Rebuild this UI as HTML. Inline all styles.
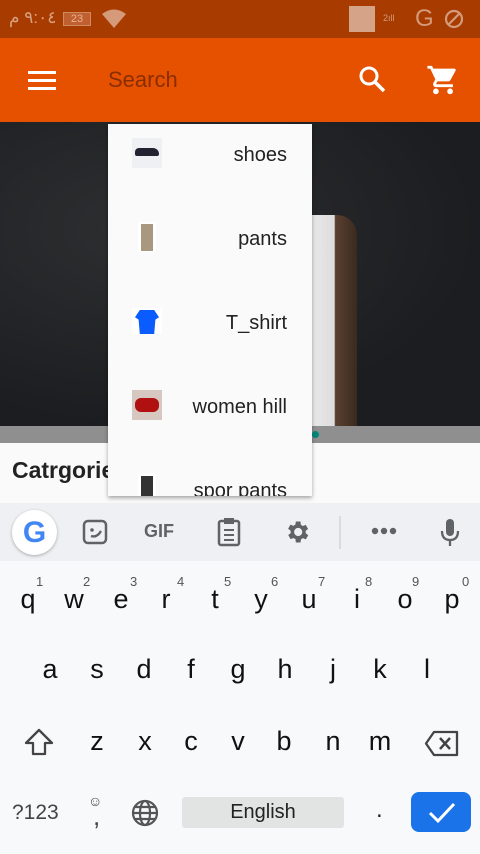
<!DOCTYPE html>
<html><head><meta charset="utf-8"><style>
*{margin:0;padding:0;box-sizing:border-box}
body{width:480px;height:854px;overflow:hidden;position:relative;font-family:"Liberation Sans","Noto Sans CJK SC",sans-serif;background:#f8f9fb}
.abs{position:absolute}
.k{position:absolute;font-size:27px;color:#111;transform:translateX(-50%);line-height:1}
.n{position:absolute;font-size:13px;color:#555;line-height:1}
.item{position:absolute;left:0;width:204px;height:84px}
.item .th{position:absolute;left:24px;top:14px;width:30px;height:30px}
.item .t{position:absolute;right:25px;top:20px;font-size:20px;color:#222}
</style></head><body>
<div class="abs" style="left:0;top:0;width:480px;height:38px;background:#a83c00"></div>
<div class="abs" style="left:9px;top:8px;font-size:17px;color:#d9a080;direction:ltr;unicode-bidi:bidi-override">م ٩:٠٤</div>
<div class="abs" style="left:63px;top:12px;width:28px;height:14px;border:1px solid #d08a60;background:#c06030;color:#e8b090;font-size:11px;text-align:center;line-height:12px">23</div>
<svg class="abs" style="left:101px;top:9px" width="27" height="20"><path d="M1 5 Q13 -4 25 5 L13 19Z" fill="#d49a7a"/></svg>
<div class="abs" style="left:349px;top:6px;width:26px;height:26px;background:#d4a388"></div>
<div class="abs" style="left:383px;top:13px;font-size:9px;color:#d49a7a">2ıll</div>
<div class="abs" style="left:415px;top:5px;font-size:24px;color:#d49a7a">G</div>
<svg class="abs" style="left:444px;top:9px" width="20" height="20"><circle cx="10" cy="10" r="8" fill="none" stroke="#d49a7a" stroke-width="2.2"/><path d="M4 16 L16 4" stroke="#d49a7a" stroke-width="2.2"/></svg>
<div class="abs" style="left:0;top:38px;width:480px;height:84px;background:#e65100"></div>
<div class="abs" style="left:28px;top:71px;width:28px;height:3px;background:#fff;box-shadow:0 8px 0 #fff,0 16px 0 #fff"></div>
<div class="abs" style="left:108px;top:67px;font-size:22px;color:#8a2e00">Search</div>
<svg class="abs" style="left:357px;top:64px" width="30" height="30"><circle cx="12" cy="12" r="8" fill="none" stroke="#fff" stroke-width="3"/><path d="M18 18 L27 27" stroke="#fff" stroke-width="3.5"/></svg>
<svg class="abs" style="left:426px;top:63px" width="34" height="34" viewBox="0 0 24 24"><path fill="#fff" d="M7 18c-1.1 0-2 .9-2 2s.9 2 2 2 2-.9 2-2-.9-2-2-2zM1 2v2h2l3.6 7.6-1.350 2.4c-.16.3-.25.6-.25 1 0 1.1.9 2 2 2h12v-2H7.4c-.14 0-.25-.1-.25-.25l.03-.12.9-1.63h7.45c.75 0 1.4-.4 1.750-1.03l3.58-6.49A1 1 0 0 0 20 4H5.2l-.94-2H1zm16 16c-1.1 0-2 .9-2 2s.9 2 2 2 2-.9 2-2-.9-2-2-2z"/></svg>
<div class="abs" style="left:0;top:122px;width:480px;height:304px;background:radial-gradient(ellipse at 30% 35%,#2e2f31,#1c1d20 70%)"></div>
<div class="abs" style="left:300px;top:215px;width:57px;height:211px;background:linear-gradient(90deg,#eee,#ddd 60%,#5a4030 62%,#3a2a20);border-radius:10px 20px 0 0"></div>
<div class="abs" style="left:0;top:426px;width:480px;height:17px;background:#8f8f8f"></div>
<div class="abs" style="left:312px;top:431px;width:7px;height:7px;border-radius:50%;background:#00897b"></div>
<div class="abs" style="left:0;top:443px;width:480px;height:60px;background:#fafafa"></div>
<div class="abs" style="left:12px;top:457px;font-size:23px;font-weight:bold;color:#222">Catrgories</div>
<div class="abs" style="left:108px;top:124px;width:204px;height:372px;background:#fafafa;box-shadow:0 2px 4px rgba(0,0,0,.35);overflow:hidden">
<div class="item" style="top:0"><div class="th" style="background:#eef0f3"><div style="margin:10px 3px;width:24px;height:8px;background:#223;border-radius:4px 6px 2px 2px"></div></div><div class="t">shoes</div></div>
<div class="item" style="top:84px"><div class="th" style="left:30px;width:18px;background:#fff"><div style="margin:2px 3px;width:12px;height:27px;background:#a89880"></div></div><div class="t">pants</div></div>
<div class="item" style="top:168px"><div class="th" style="top:16px;height:26px;background:#fff"><div style="margin:2px 3px;width:24px;height:24px;background:#0b5cff;clip-path:polygon(20% 0,80% 0,100% 30%,85% 40%,80% 100%,20% 100%,15% 40%,0 30%)"></div></div><div class="t">T_shirt</div></div>
<div class="item" style="top:252px"><div class="th" style="background:#d6c8c0"><div style="margin:8px 3px;width:24px;height:14px;background:#b01010;border-radius:6px"></div></div><div class="t">women hill</div></div>
<div class="item" style="top:336px"><div class="th" style="left:30px;width:18px;background:#fff"><div style="margin:2px 3px;width:12px;height:28px;background:#333"></div></div><div class="t">spor pants</div></div>
</div>
<div class="abs" style="left:0;top:503px;width:480px;height:58px;background:#eef0f3"></div>
<div class="abs" style="left:12px;top:510px;width:45px;height:45px;border-radius:50%;background:#fff;box-shadow:0 1px 3px rgba(0,0,0,.3);font-weight:bold;font-size:30px;text-align:center;line-height:45px;color:#4285f4">G</div>
<svg class="abs" style="left:82px;top:519px" width="28" height="28"><rect x="2" y="2" width="22" height="22" rx="4" fill="none" stroke="#5f6368" stroke-width="2.5"/><circle cx="10" cy="11" r="1.8" fill="#5f6368"/><path d="M9 17 Q15 19 19 12" fill="none" stroke="#5f6368" stroke-width="2.3"/></svg>
<div class="abs" style="left:144px;top:521px;font-size:18px;font-weight:bold;color:#5f6368">GIF</div>
<svg class="abs" style="left:217px;top:517px" width="26" height="30"><rect x="2" y="4" width="20" height="24" rx="2" fill="none" stroke="#5f6368" stroke-width="2.5"/><rect x="7" y="1" width="10" height="6" fill="#5f6368"/><path d="M7 13h10M7 18h10M7 23h10" stroke="#5f6368" stroke-width="2"/></svg>
<svg class="abs" style="left:283px;top:518px" width="28" height="28" viewBox="0 0 24 24"><path fill="#5f6368" d="M19.4 13a7.5 7.5 0 0 0 0-2l2.1-1.6-2-3.5-2.5 1a7 7 0 0 0-1.7-1L15 3h-4l-.4 2.7a7 7 0 0 0-1.7 1l-2.5-1-2 3.5L6.6 11a7.5 7.5 0 0 0 0 2l-2.1 1.6 2 3.5 2.5-1a7 7 0 0 0 1.7 1L11 21h4l.4-2.7a7 7 0 0 0 1.7-1l2.5 1 2-3.5zM13 15.5a3.5 3.5 0 1 1 0-7 3.5 3.5 0 0 1 0 7z"/></svg>
<div class="abs" style="left:339px;top:516px;width:2px;height:33px;background:#d8dadd"></div>
<svg class="abs" style="left:370px;top:526px" width="28" height="10"><circle cx="5" cy="5" r="3.2" fill="#5f6368"/><circle cx="14" cy="5" r="3.2" fill="#5f6368"/><circle cx="23" cy="5" r="3.2" fill="#5f6368"/></svg>
<svg class="abs" style="left:438px;top:518px" width="24" height="30"><rect x="8" y="1" width="8" height="17" rx="4" fill="#5f6368"/><path d="M4 13 Q4 22 12 22 Q20 22 20 13M12 22v6" fill="none" stroke="#5f6368" stroke-width="2.3"/></svg>
<div class="n" style="left:36px;top:575px">1</div><div class="n" style="left:83px;top:575px">2</div><div class="n" style="left:130px;top:575px">3</div><div class="n" style="left:177px;top:575px">4</div><div class="n" style="left:224px;top:575px">5</div><div class="n" style="left:271px;top:575px">6</div><div class="n" style="left:318px;top:575px">7</div><div class="n" style="left:365px;top:575px">8</div><div class="n" style="left:412px;top:575px">9</div><div class="n" style="left:462px;top:575px">0</div>
<div class="k" style="left:28px;top:586px">q</div><div class="k" style="left:74px;top:586px">w</div><div class="k" style="left:121px;top:586px">e</div><div class="k" style="left:166px;top:586px">r</div><div class="k" style="left:215px;top:586px">t</div><div class="k" style="left:261px;top:586px">y</div><div class="k" style="left:309px;top:586px">u</div><div class="k" style="left:357px;top:586px">i</div><div class="k" style="left:405px;top:586px">o</div><div class="k" style="left:452px;top:586px">p</div>
<div class="k" style="left:50px;top:656px">a</div><div class="k" style="left:97px;top:656px">s</div><div class="k" style="left:144px;top:656px">d</div><div class="k" style="left:191px;top:656px">f</div><div class="k" style="left:238px;top:656px">g</div><div class="k" style="left:285px;top:656px">h</div><div class="k" style="left:333px;top:656px">j</div><div class="k" style="left:380px;top:656px">k</div><div class="k" style="left:427px;top:656px">l</div>
<svg class="abs" style="left:23px;top:727px" width="32" height="30"><path d="M16 3 L29 16 H22 V27 H10 V16 H3Z" fill="none" stroke="#444" stroke-width="2.3" stroke-linejoin="round"/></svg>
<div class="k" style="left:97px;top:728px">z</div><div class="k" style="left:145px;top:728px">x</div><div class="k" style="left:191px;top:728px">c</div><div class="k" style="left:238px;top:728px">v</div><div class="k" style="left:284px;top:728px">b</div><div class="k" style="left:333px;top:728px">n</div><div class="k" style="left:380px;top:728px">m</div>
<svg class="abs" style="left:424px;top:730px" width="35" height="27"><path d="M10 2 H33 V25 H10 L2 13.5Z" fill="none" stroke="#444" stroke-width="2.3" stroke-linejoin="round"/><path d="M16 8 L26 19 M26 8 L16 19" stroke="#444" stroke-width="2.5"/></svg>
<div class="abs" style="left:12px;top:801px;font-size:21px;color:#444">?123</div>
<div class="abs" style="left:88px;top:793px;font-size:14px;color:#444">☺</div>
<div class="abs" style="left:93px;top:801px;font-size:26px;color:#444">,</div>
<svg class="abs" style="left:130px;top:798px" width="30" height="30"><g fill="none" stroke="#555" stroke-width="2.2"><circle cx="15" cy="15" r="12"/><ellipse cx="15" cy="15" rx="5" ry="12"/><path d="M3 15h24M5 9h20M5 21h20"/></g></svg>
<div class="abs" style="left:182px;top:797px;width:162px;height:31px;border-radius:3px;background:#e2e3e3;text-align:center;font-size:20px;line-height:31px;color:#222">English</div>
<div class="abs" style="left:376px;top:796px;font-size:24px;color:#222">.</div>
<div class="abs" style="left:411px;top:792px;width:60px;height:40px;border-radius:8px;background:#1a73e8"></div>
<svg class="abs" style="left:426px;top:797px" width="32" height="30"><path d="M4 16 L12 24 L28 7" fill="none" stroke="#fff" stroke-width="3"/></svg>
</body></html>
